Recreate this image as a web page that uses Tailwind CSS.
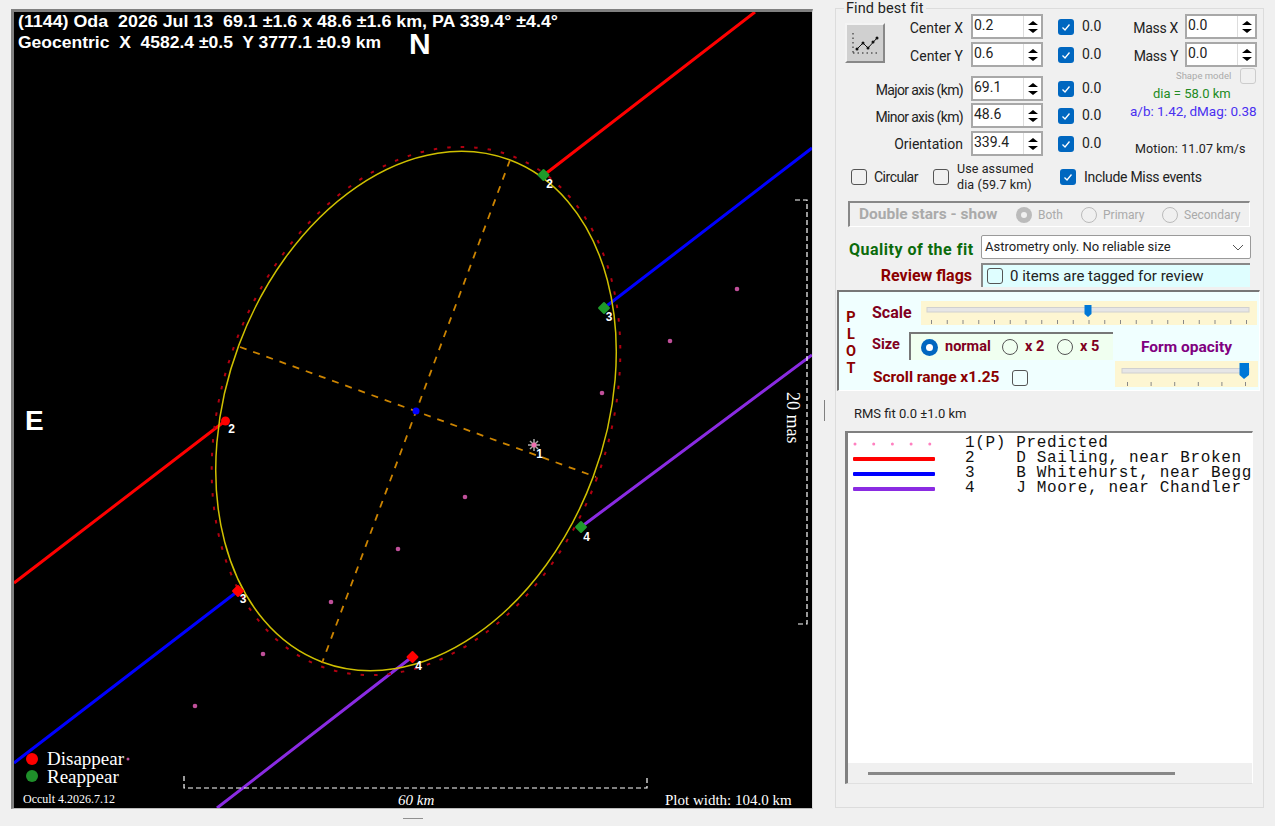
<!DOCTYPE html>
<html lang="en">
<head>
<meta charset="UTF-8">
<title>Asteroid shape fit</title>
<script src="https://cdn.jsdelivr.net/npm/@tailwindcss/browser@4"></script>
</head>
<body class="w-[1275px] h-[826px] overflow-hidden bg-[#f0f0f0] font-['Roboto',sans-serif] text-[14px] text-[#222] relative flex">

<!-- plot -->
<div class="ml-[11px] mt-[9px] w-[802px] h-[800px] border-t-[3px] border-l-[3px] border-t-[#808080] border-l-[#808080] border-r border-b border-r-[#ddd] border-b-[#bbb] bg-black shrink-0">
<svg width="798" height="796" viewBox="14 12 798 796" class="block font-['Liberation_Sans',sans-serif]">
  <!-- chords -->
  <g fill="none" stroke-width="3">
    <path stroke="#ff0000" d="M14 583L225 421M544 175L755 12"/>
    <path stroke="#0000ff" d="M14 763L238 591M604 308L812 148"/>
    <path stroke="#8a2be2" d="M217 808L412 657M581 527L812 355"/>
  </g>
  <!-- predicted limb and fit -->
  <ellipse cx="416" cy="411" rx="193" ry="272.5" transform="rotate(20.4 416 411)" fill="none" stroke="#b00010" stroke-width="2" stroke-dasharray="3.500 10"/>
  <ellipse cx="416" cy="411" rx="189" ry="268" transform="rotate(20.4 416 411)" fill="none" stroke="#cfc000" stroke-width="1.500"/>
  <path d="M510 160L322 663M240 347L596 477" stroke="#cc8400" stroke-width="1.800" stroke-dasharray="7 7" fill="none"/>
  <circle cx="416" cy="411" r="3.500" fill="#0000ff"/>
  <!-- path of predicted star -->
  <g fill="#c0509a">
    <circle cx="737" cy="289" r="2.300"/><circle cx="670" cy="341" r="2.300"/><circle cx="602" cy="393" r="2.300"/>
    <circle cx="465" cy="497" r="2.300"/><circle cx="398" cy="549" r="2.300"/><circle cx="331" cy="602" r="2.300"/>
    <circle cx="263" cy="654" r="2.300"/><circle cx="195" cy="706" r="2.300"/><circle cx="128" cy="759" r="1.500"/>
  </g>
  <path d="M528 445H540M534 439V451M530 441L538 449M538 441L530 449" stroke="#aaa" stroke-width="1.500"/>
  <circle cx="534" cy="445" r="2.500" fill="#f070b0"/>
  <!-- events -->
  <g fill="#ff0000">
    <circle cx="225.500" cy="421" r="4.500"/>
    <rect x="233.500" y="586.500" width="9" height="9" rx="1" transform="rotate(45 238 591)"/>
    <rect x="408" y="652.500" width="9" height="9" rx="1" transform="rotate(45 412.500 657)"/>
  </g>
  <g fill="#1f9a2a">
    <rect x="539" y="170.500" width="9" height="9" rx="1" transform="rotate(45 543.500 175)"/>
    <rect x="599.500" y="303.500" width="9" height="9" rx="1" transform="rotate(45 604 308)"/>
    <rect x="576.500" y="522.500" width="9" height="9" rx="1" transform="rotate(45 581 527)"/>
  </g>
  <g fill="#fff" font-size="12" font-weight="700" text-anchor="middle">
    <text x="231.500" y="433">2</text><text x="243" y="603">3</text><text x="418.500" y="670">4</text>
    <text x="549.500" y="188">2</text><text x="609" y="321">3</text><text x="586.500" y="541">4</text><text x="539.500" y="458">1</text>
  </g>
  <!-- scale bars -->
  <path d="M184 776V788H647V776M795 200H807V624H795" fill="none" stroke="#fff" stroke-width="1.200" stroke-dasharray="5 3"/>
  <!-- captions -->
  <g fill="#fff" font-size="16" font-weight="700">
    <text x="18" y="27" textLength="540" lengthAdjust="spacingAndGlyphs" xml:space="preserve">(1144) Oda  2026 Jul 13  69.1 ±1.6 x 48.6 ±1.6 km, PA 339.4° ±4.4°</text>
    <text x="18" y="48" textLength="363" lengthAdjust="spacingAndGlyphs" xml:space="preserve">Geocentric  X  4582.4 ±0.5  Y 3777.1 ±0.9 km</text>
  </g>
  <text x="409" y="54" fill="#fff" font-size="30" font-weight="700">N</text>
  <text x="25" y="430" fill="#fff" font-size="28" font-weight="700">E</text>
  <g fill="#fff" class="font-['Liberation_Serif',serif]">
    <text x="47" y="765" font-size="19">Disappear</text>
    <text x="47" y="783" font-size="19">Reappear</text>
    <text x="23" y="803" font-size="12">Occult 4.2026.7.12</text>
    <text x="398" y="805" font-size="15" font-style="italic">60 km</text>
    <text x="665" y="805" font-size="15">Plot width: 104.0 km</text>
    <text transform="translate(787 392) rotate(90)" font-size="18">20 mas</text>
  </g>
  <circle cx="32" cy="759" r="6" fill="#ff0000"/>
  <circle cx="32" cy="776" r="6" fill="#1f8f2a"/>
</svg>
</div>

<!-- splitters -->
<div class="w-[22px] shrink-0 flex justify-center items-center h-[820px]"><div class="w-px h-[21px] bg-[#808080]"></div></div>
<div class="absolute left-[403px] top-[818px] w-[20px] h-px bg-[#909090]"></div>

<!-- find best fit -->
<div class="relative mt-[8px] w-[429px] h-[800px] border border-[#dcdcdc] shrink-0">
  <div class="absolute left-[8px] top-[-8px] px-[2px] bg-[#f0f0f0] leading-[16px] text-[14.500px] tracking-[0.100px]">Find best fit</div>

  <div class="flex pt-[5px] h-[147px]">
    <div class="w-[274px] shrink-0">
      <!-- centre rows with fit button -->
      <div class="flex">
        <div class="ml-[9px] mt-[9px] w-[40px] h-[40px] shrink-0 bg-[#d0d0d0] border-2 border-t-[#f4f4f4] border-l-[#f4f4f4] border-r-[#888] border-b-[#888]">
          <svg width="36" height="36" viewBox="0 0 36 36">
            <path d="M6 8v22M6 28H32" stroke="#555" stroke-width="1.500" stroke-dasharray="1.500 3" fill="none"/>
            <path d="M10 24L16 18L21 23L30 13" stroke="#111" fill="none"/>
            <path d="M10 24h.01M16 18h.01M21 23h.01M26 17h.01M30 13h.01" stroke="#111" stroke-width="3" stroke-linecap="round"/>
          </svg>
        </div>
        <div>
          <div class="flex items-center h-[25px]">
            <span class="w-[78px] text-right pt-[3px]">Center X</span>
            <div class="ml-[8px] w-[72px] h-[25px] flex border-2 border-[#a8a8a8] bg-white"><span class="flex-1 pl-[1px] leading-[19px]">0.2</span><div class="w-[18px] flex flex-col items-center justify-center gap-[4px] border-l border-[#ddd]"><div class="w-0 h-0 border-x-[5px] border-x-transparent border-b-[4px] border-b-black"></div><div class="w-0 h-0 border-x-[5px] border-x-transparent border-t-[4px] border-t-black"></div></div></div>
            <div class="ml-[15px] w-[16px] h-[16px] rounded-[3px] bg-[#0067c0] flex items-center justify-center"><svg width="12" height="12" viewBox="0 0 12 12"><path d="M2.500 6.500L5 9L9.500 3.500" stroke="#fff" stroke-width="1.300" fill="none"/></svg></div>
            <span class="ml-[8px]">0.0</span>
          </div>
          <div class="flex items-center h-[25px] mt-[3px]">
            <span class="w-[78px] text-right pt-[3px]">Center Y</span>
            <div class="ml-[8px] w-[72px] h-[25px] flex border-2 border-[#a8a8a8] bg-white"><span class="flex-1 pl-[1px] leading-[19px]">0.6</span><div class="w-[18px] flex flex-col items-center justify-center gap-[4px] border-l border-[#ddd]"><div class="w-0 h-0 border-x-[5px] border-x-transparent border-b-[4px] border-b-black"></div><div class="w-0 h-0 border-x-[5px] border-x-transparent border-t-[4px] border-t-black"></div></div></div>
            <div class="ml-[15px] w-[16px] h-[16px] rounded-[3px] bg-[#0067c0] flex items-center justify-center"><svg width="12" height="12" viewBox="0 0 12 12"><path d="M2.500 6.500L5 9L9.500 3.500" stroke="#fff" stroke-width="1.300" fill="none"/></svg></div>
            <span class="ml-[8px]">0.0</span>
          </div>
        </div>
      </div>
      <!-- axis rows -->
      <div class="flex items-center h-[25px] mt-[9px]">
        <span class="w-[127px] text-right pt-[3px] tracking-[-0.650px]">Major axis (km)</span>
        <div class="ml-[8px] w-[72px] h-[25px] flex border-2 border-[#a8a8a8] bg-white"><span class="flex-1 pl-[1px] leading-[19px]">69.1</span><div class="w-[18px] flex flex-col items-center justify-center gap-[4px] border-l border-[#ddd]"><div class="w-0 h-0 border-x-[5px] border-x-transparent border-b-[4px] border-b-black"></div><div class="w-0 h-0 border-x-[5px] border-x-transparent border-t-[4px] border-t-black"></div></div></div>
        <div class="ml-[15px] w-[16px] h-[16px] rounded-[3px] bg-[#0067c0] flex items-center justify-center"><svg width="12" height="12" viewBox="0 0 12 12"><path d="M2.500 6.500L5 9L9.500 3.500" stroke="#fff" stroke-width="1.300" fill="none"/></svg></div>
        <span class="ml-[8px]">0.0</span>
      </div>
      <div class="flex items-center h-[25px] mt-[2px]">
        <span class="w-[127px] text-right pt-[3px] tracking-[-0.650px]">Minor axis (km)</span>
        <div class="ml-[8px] w-[72px] h-[25px] flex border-2 border-[#a8a8a8] bg-white"><span class="flex-1 pl-[1px] leading-[19px]">48.6</span><div class="w-[18px] flex flex-col items-center justify-center gap-[4px] border-l border-[#ddd]"><div class="w-0 h-0 border-x-[5px] border-x-transparent border-b-[4px] border-b-black"></div><div class="w-0 h-0 border-x-[5px] border-x-transparent border-t-[4px] border-t-black"></div></div></div>
        <div class="ml-[15px] w-[16px] h-[16px] rounded-[3px] bg-[#0067c0] flex items-center justify-center"><svg width="12" height="12" viewBox="0 0 12 12"><path d="M2.500 6.500L5 9L9.500 3.500" stroke="#fff" stroke-width="1.300" fill="none"/></svg></div>
        <span class="ml-[8px]">0.0</span>
      </div>
      <div class="flex items-center h-[25px] mt-[3px]">
        <span class="w-[127px] text-right pt-[1px]">Orientation</span>
        <div class="ml-[8px] w-[72px] h-[25px] flex border-2 border-[#a8a8a8] bg-white"><span class="flex-1 pl-[1px] leading-[19px]">339.4</span><div class="w-[18px] flex flex-col items-center justify-center gap-[4px] border-l border-[#ddd]"><div class="w-0 h-0 border-x-[5px] border-x-transparent border-b-[4px] border-b-black"></div><div class="w-0 h-0 border-x-[5px] border-x-transparent border-t-[4px] border-t-black"></div></div></div>
        <div class="ml-[15px] w-[16px] h-[16px] rounded-[3px] bg-[#0067c0] flex items-center justify-center"><svg width="12" height="12" viewBox="0 0 12 12"><path d="M2.500 6.500L5 9L9.500 3.500" stroke="#fff" stroke-width="1.300" fill="none"/></svg></div>
        <span class="ml-[8px]">0.0</span>
      </div>
    </div>

    <!-- mass and derived values -->
    <div class="w-[154px] shrink-0">
      <div class="flex items-center h-[25px]">
        <span class="w-[68px] text-right pt-[3px] tracking-[-0.300px]">Mass X</span>
        <div class="ml-[7px] w-[72px] h-[25px] flex border-2 border-[#a8a8a8] bg-white"><span class="flex-1 pl-[1px] leading-[19px]">0.0</span><div class="w-[18px] flex flex-col items-center justify-center gap-[4px] border-l border-[#ddd]"><div class="w-0 h-0 border-x-[5px] border-x-transparent border-b-[4px] border-b-black"></div><div class="w-0 h-0 border-x-[5px] border-x-transparent border-t-[4px] border-t-black"></div></div></div>
      </div>
      <div class="flex items-center h-[25px] mt-[3px]">
        <span class="w-[68px] text-right pt-[3px] tracking-[-0.300px]">Mass Y</span>
        <div class="ml-[7px] w-[72px] h-[25px] flex border-2 border-[#a8a8a8] bg-white"><span class="flex-1 pl-[1px] leading-[19px]">0.0</span><div class="w-[18px] flex flex-col items-center justify-center gap-[4px] border-l border-[#ddd]"><div class="w-0 h-0 border-x-[5px] border-x-transparent border-b-[4px] border-b-black"></div><div class="w-0 h-0 border-x-[5px] border-x-transparent border-t-[4px] border-t-black"></div></div></div>
      </div>
      <div class="flex items-center h-[16px] mt-[1px] pl-[66px]">
        <span class="text-[9.500px] text-[#aaa] w-[64px]">Shape model</span>
        <div class="w-[16px] h-[16px] rounded-[3px] border border-[#ccc]"></div>
      </div>
      <div class="h-[16px] leading-[16px] mt-[2px] pl-[43px] text-[13px] text-[#228b22]">dia = 58.0 km</div>
      <div class="h-[16px] leading-[16px] mt-[1px] pl-[20px] text-[13.500px] text-[#4a30f0] whitespace-nowrap">a/b: 1.42, dMag: 0.38</div>
      <div class="h-[16px] leading-[16px] mt-[22px] pl-[25px] text-[12.500px] tracking-[0.100px] whitespace-nowrap">Motion: 11.07 km/s</div>
    </div>
  </div>

  <!-- options -->
  <div class="flex items-center h-[32px] mt-[5px] pl-[15px]">
    <div class="w-[16px] h-[16px] rounded-[3px] border border-[#555]"></div>
    <span class="ml-[7px] w-[59px] tracking-[-0.500px]">Circular</span>
    <div class="w-[16px] h-[16px] rounded-[3px] border border-[#555]"></div>
    <span class="ml-[8px] w-[103px] text-[12.500px] tracking-[0.100px] leading-[16px]">Use assumed<br>dia (59.7 km)</span>
    <div class="w-[16px] h-[16px] rounded-[3px] bg-[#0067c0] flex items-center justify-center"><svg width="12" height="12" viewBox="0 0 12 12"><path d="M2.500 6.500L5 9L9.500 3.500" stroke="#fff" stroke-width="1.300" fill="none"/></svg></div>
    <span class="ml-[8px] tracking-[-0.300px]">Include Miss events</span>
  </div>

  <!-- double stars -->
  <div class="flex items-center ml-[12px] mt-[8px] w-[402px] h-[26px] border-t-2 border-l-2 border-t-[#888] border-l-[#888] border-r border-b border-r-[#fff] border-b-[#fff] text-[#aaa] text-[12px]">
    <span class="ml-[9px] w-[157px] font-bold text-[15.500px]">Double stars - show</span>
    <div class="w-[16px] h-[16px] rounded-full bg-[#bbb] flex items-center justify-center"><div class="w-[6px] h-[6px] rounded-full bg-[#f0f0f0]"></div></div>
    <span class="ml-[6px] w-[43px]">Both</span>
    <div class="w-[16px] h-[16px] rounded-full border border-[#bbb]"></div>
    <span class="ml-[6px] w-[59px]">Primary</span>
    <div class="w-[16px] h-[16px] rounded-full border border-[#bbb]"></div>
    <span class="ml-[6px]">Secondary</span>
  </div>

  <!-- quality -->
  <div class="flex items-center h-[24px] mt-[8px]">
    <span class="ml-[13px] w-[132px] font-bold text-[16px] tracking-[0.500px] text-[#0b6b0b] mt-[6px] whitespace-nowrap">Quality of the fit</span>
    <div class="w-[270px] h-[24px] flex items-center justify-between bg-white border border-[#9a9a9a] rounded-[2px] pl-[3px] pr-[6px] text-[13px]">
      <span>Astrometry only. No reliable size</span>
      <svg width="12" height="7" viewBox="0 0 12 7"><path d="M1 1L6 6L11 1" stroke="#555" fill="none"/></svg>
    </div>
  </div>
  <div class="flex items-center h-[24px] mt-[4px]">
    <span class="w-[136px] text-right font-bold text-[16px] text-[#8b0000] pt-[2px]">Review flags</span>
    <div class="ml-[9px] w-[269px] h-[24px] flex items-center bg-[#dffeff] border-t-2 border-l-2 border-t-[#888] border-l-[#888] pl-[4px]">
      <div class="w-[16px] h-[16px] rounded-[3px] border border-[#555]"></div>
      <span class="ml-[7px] text-[15px]">0 items are tagged for review</span>
    </div>
  </div>

  <!-- plot options -->
  <div class="flex ml-[1px] mt-[3px] w-[423px] h-[101px] bg-[#f0ffff] border-t-2 border-l-2 border-t-[#777] border-l-[#777] border-r border-b border-r-white border-b-white text-[#800020] font-bold text-[14.500px]">
    <div class="w-[24px] shrink-0 pt-[17px] text-center leading-[17px] text-[#8b0000]">P<br>L<br>O<br>T</div>
    <div class="flex-1">
      <div class="flex items-center h-[24px] mt-[9px] pl-[9px]">
        <span class="w-[49px] text-[16px]">Scale</span>
        <svg width="336" height="24" viewBox="0 0 336 24" class="bg-[#fdf6d2] shrink-0">
          <rect x="6" y="6.500" width="322" height="4.500" fill="#e6e6e6" stroke="#d0d0d0"/>
          <line x1="10" x2="326" y1="21" y2="21" stroke="#888" stroke-width="4" stroke-dasharray="1 14.750"/>
          <path d="M163.500 4H170.500V13L167 16L163.500 13Z" fill="#0078d7"/>
        </svg>
      </div>
      <div class="flex h-[28px] mt-[7px] pl-[9px]">
        <span class="w-[37px] leading-[26px]">Size</span>
        <div class="w-[204px] flex items-center bg-[#f0fff0] border-t-2 border-l-2 border-t-[#777] border-l-[#777] pl-[10px] shrink-0">
          <div class="w-[17px] h-[17px] rounded-full bg-[#0067c0] flex items-center justify-center"><div class="w-[7px] h-[7px] rounded-full bg-white"></div></div>
          <span class="ml-[7px] w-[57px]">normal</span>
          <div class="w-[16px] h-[16px] rounded-full border border-[#555]"></div>
          <span class="ml-[7px] w-[32px]">x 2</span>
          <div class="w-[16px] h-[16px] rounded-full border border-[#555]"></div>
          <span class="ml-[7px]">x 5</span>
        </div>
        <span class="w-[143px] ml-[2px] text-center text-[#800080] text-[15.500px] leading-[30px]">Form opacity</span>
      </div>
      <div class="flex items-center h-[26px] mt-[1px] pl-[10px] text-[#8b0000]">
        <span class="w-[139px] text-[15.500px] mt-[8px]">Scroll range x1.25</span>
        <div class="w-[16px] h-[16px] rounded-[3px] border border-[#555] mt-[8px]"></div>
        <svg width="143" height="26" viewBox="0 0 143 26" class="ml-[87px] bg-[#fdf6d2] shrink-0">
          <rect x="7" y="7.500" width="127" height="4.500" fill="#e6e6e6" stroke="#d0d0d0"/>
          <line x1="12" x2="131" y1="23" y2="23" stroke="#888" stroke-width="4" stroke-dasharray="1 22.600"/>
          <path d="M124.500 2H134V14L129 18L124.500 14Z" fill="#0078d7"/>
        </svg>
      </div>
    </div>
  </div>

  <div class="h-[16px] leading-[16px] mt-[15px] ml-[18px] text-[13px]">RMS fit 0.0 ±1.0 km</div>

  <!-- event list -->
  <div class="flex flex-col ml-[9px] mt-[9px] w-[408px] h-[353px] border-t-2 border-l-[3px] border-t-[#808080] border-l-[#808080] border-r border-b border-r-white border-b-[#e0e0e0]">
    <div class="flex-1 bg-white overflow-hidden pt-[3px] font-['Liberation_Mono',monospace] text-[16px] tracking-[0.650px] leading-[15px] text-[#111]">
      <div class="flex items-center h-[15px]"><svg width="113" height="4" class="shrink-0 ml-[4px]"><path d="M3 2H82" stroke="#ff80c0" stroke-width="3" stroke-linecap="round" stroke-dasharray="0 18.700"/></svg><span class="whitespace-pre">1(P) Predicted</span></div>
      <div class="flex items-center h-[15px]"><svg width="113" height="4" class="shrink-0 ml-[4px]"><rect x="1" width="82" height="4" rx="1" fill="#ff0000"/></svg><span class="whitespace-pre">2    D Sailing, near Broken</span></div>
      <div class="flex items-center h-[15px]"><svg width="113" height="4" class="shrink-0 ml-[4px]"><rect x="1" width="82" height="4" rx="1" fill="#0000ff"/></svg><span class="whitespace-pre">3    B Whitehurst, near Begg</span></div>
      <div class="flex items-center h-[15px]"><svg width="113" height="4" class="shrink-0 ml-[4px]"><rect x="1" width="82" height="4" rx="1" fill="#8a2be2"/></svg><span class="whitespace-pre">4    J Moore, near Chandler</span></div>
    </div>
    <div class="h-[20px] flex items-center pl-[20px]"><div class="w-[307px] h-[3px] bg-[#888]"></div></div>
  </div>
</div>
</body>
</html>
